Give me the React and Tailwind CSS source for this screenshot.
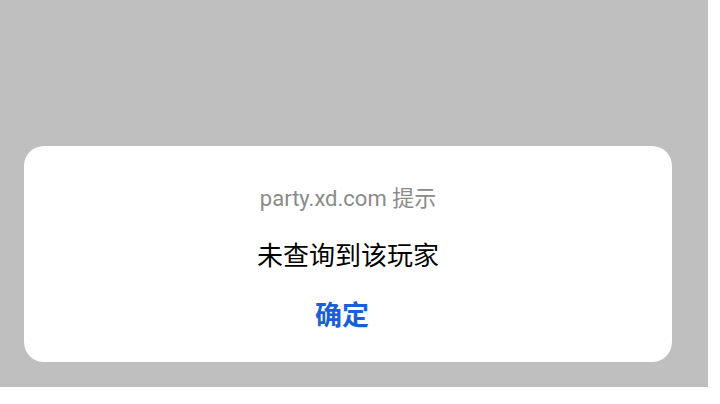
export default function App() {
  return (
    <div className="w-[720px] h-[404px] bg-white overflow-hidden font-['Roboto','Noto_Sans_CJK_SC',sans-serif]">
      <div className="w-[708px] h-[387px] bg-[#bfbfbf] pt-[146px] pl-[24px] pr-[36px]">
        <div className="h-[216px] bg-white rounded-[20px] flex flex-col items-center pt-[39px]">
          <div className="text-[22px] leading-[28px] text-[#8a8a8a]">party.xd.com 提示</div>
          <div className="mt-[27px] text-[26px] leading-[32px] text-black">未查询到该玩家</div>
          <button className="mt-[26px] mr-[12px] text-[27px] leading-[36px] font-bold text-[#1a5fd6]">确定</button>
        </div>
      </div>
    </div>
  );
}
